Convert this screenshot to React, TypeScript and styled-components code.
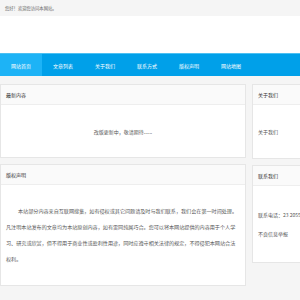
import React from "react";
import styled, { createGlobalStyle } from "styled-components";

const Global = createGlobalStyle`
  html, body { margin: 0; padding: 0; }
  body {
    background: #ffffff;
    font-family: "Noto Sans CJK SC", "Noto Sans", sans-serif;
    overflow: hidden;
    width: 300px;
    height: 300px;
  }
`;

const Page = styled.div`
  width: 360px;
  display: flex;
  flex-direction: column;
`;

const TopBar = styled.div`
  height: 16px;
  background: #f5f5f5;
  display: flex;
  align-items: center;
  padding-left: 5px;
  font-size: 4.3px;
  color: #666;
`;

const Spacer = styled.div`
  height: 37px;
  background: #fff;
`;

const Nav = styled.nav`
  height: 22px;
  background: #00a0e9;
  border-top: 1px solid #4cc0f2;
  display: flex;
`;

const NavItem = styled.a<{ $active?: boolean }>`
  width: 42px;
  display: flex;
  align-items: center;
  justify-content: center;
  color: #fff;
  font-size: 5px;
  text-decoration: none;
  background: ${(p) => (p.$active ? "#1db3f6" : "transparent")};
`;

const Body = styled.div`
  background: #f5f5f5;
  padding-top: 8px;
  padding-bottom: 40px;
  display: grid;
  grid-template-columns: 246px 110px;
  column-gap: 6px;
  align-items: start;
`;

const Column = styled.div`
  display: flex;
  flex-direction: column;
  gap: 6px;
`;

const Panel = styled.section`
  background: #fff;
  border: 1px solid #e6e6e6;
  box-sizing: border-box;
`;

const PanelHead = styled.h2`
  margin: 0;
  height: 19px;
  display: flex;
  align-items: center;
  padding-left: 5px;
  font-size: 5px;
  font-weight: normal;
  color: #333;
  background: #fafafa;
  border-bottom: 1px solid #eeeeee;
`;

const PanelBody = styled.div<{ $height: number; $center?: boolean }>`
  height: ${(p) => p.$height}px;
  display: flex;
  flex-direction: column;
  justify-content: center;
  align-items: ${(p) => (p.$center ? "center" : "flex-start")};
  padding: 0 5px;
  font-size: 5px;
  color: #555;
  gap: 12px;
`;

const Article = styled.div`
  padding: 18px 5px 18px;
  font-size: 5.1px;
  line-height: 16px;
  color: #555;
  white-space: nowrap;
`;

const Indent = styled.span`
  padding-left: 12px;
`;

export default function App() {
  return (
    <>
      <Global />
      <Page>
        <TopBar>您好！欢迎您访问本网站。</TopBar>
        <Spacer />
        <Nav>
          <NavItem $active>网站首页</NavItem>
          <NavItem>文章列表</NavItem>
          <NavItem>关于我们</NavItem>
          <NavItem>联系方式</NavItem>
          <NavItem>版权声明</NavItem>
          <NavItem>网站地图</NavItem>
        </Nav>
        <Body>
          <Column>
            <Panel>
              <PanelHead>最新内容</PanelHead>
              <PanelBody $height={52} $center>
                改版更新中，敬请期待......
              </PanelBody>
            </Panel>
            <Panel>
              <PanelHead>版权声明</PanelHead>
              <Article>
                <Indent>本站部分内容来自互联网搜集，如有侵权或其它问题请及时与我们联系，我们会在第一时间处理。</Indent>
                <br />
                凡注明本站发布的文章均为本站原创内容，如有雷同纯属巧合。您可以将本网站提供的内容用于个人学
                <br />
                习、研究或欣赏，但不得用于商业性或盈利性用途，同时应遵守相关法律的规定，不得侵犯本网站合法
                <br />
                权利。
              </Article>
            </Panel>
          </Column>
          <Column>
            <Panel>
              <PanelHead>关于我们</PanelHead>
              <PanelBody $height={53}>关于我们</PanelBody>
            </Panel>
            <Panel>
              <PanelHead>联系我们</PanelHead>
              <PanelBody $height={76}>
                <div>联系电话：23 2055 6688</div>
                <div>不良信息举报</div>
              </PanelBody>
            </Panel>
          </Column>
        </Body>
      </Page>
    </>
  );
}
